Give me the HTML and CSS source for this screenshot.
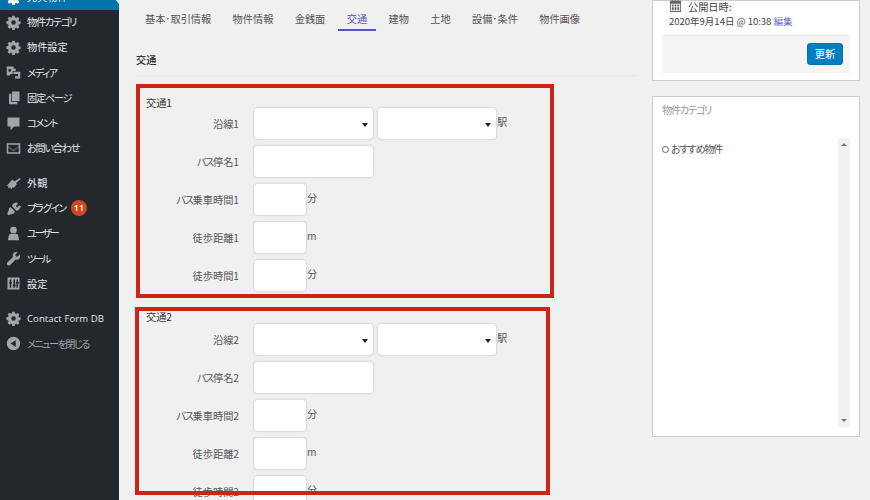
FILE: index.html
```html
<!DOCTYPE html>
<html lang="ja">
<head>
<meta charset="utf-8">
<title>交通</title>
<link rel="stylesheet" href="styles.css">
</head>
<body>
<svg class="defs" width="0" height="0" aria-hidden="true">
  <symbol id="gear" viewBox="0 0 20 20"><path d="M8.400 1h3.200l.5 2.400 1.500.6 2-1.300 2.200 2.200-1.300 2 .6 1.500 2.400.5v3.200l-2.400.5-.6 1.500 1.300 2-2.200 2.200-2-1.300-1.500.6-.5 2.400H8.400l-.5-2.400-1.500-.6-2 1.300-2.200-2.200 1.300-2-.6-1.500L.5 11.600V8.400l2.400-.5.6-1.500-1.300-2 2.200-2.200 2 1.300 1.500-.6zM10 7a3 3 0 1 0 0 6 3 3 0 0 0 0-6z" fill-rule="evenodd"/></symbol>
</svg>
<div class="layout">
  <nav class="sidebar">
    <a class="item current"><svg class="ico"><use href="#gear"/></svg><span>売買物件</span></a>
    <a class="item"><svg class="ico"><use href="#gear"/></svg><span class="kana">物件カテゴリ</span></a>
    <a class="item"><svg class="ico"><use href="#gear"/></svg><span>物件設定</span></a>
    <a class="item"><svg class="ico" viewBox="0 0 20 20"><path d="M1 2h9v3h3v3H9v4H6l-1 2H1zM5 5a2 2 0 1 0 0 4 2 2 0 0 0 0-4zM10 9h9v9h-7v-3h4v-3h-6z" fill-rule="evenodd"/></svg><span class="kana">メディア</span></a>
    <a class="item"><svg class="ico" viewBox="0 0 20 20"><path d="M8 2h10v13H8zM4 5h3v11h8v3H4z"/></svg><span class="kana">固定ページ</span></a>
    <a class="item"><svg class="ico" viewBox="0 0 20 20"><path d="M2 2h16v12h-7l-5 5v-5H2z"/></svg><span class="kana">コメント</span></a>
    <a class="item group-end"><svg class="ico" viewBox="0 0 20 20"><path d="M1 3h18v14H1zM3 5v1.500l7 5 7-5V5zM3 8.500V15h14V8.500l-7 5zM3 6.900l7 5 7-5v1.200l-7 5-7-5z" fill-rule="evenodd"/></svg><span class="kana">お問い合わせ</span></a>
    <a class="item"><svg class="ico" viewBox="0 0 20 20"><path d="M19 2.500l.5 1.500-7.500 6.500L9.500 8zM8.500 4.500l6 6-4 5.500-1.500-1.500-2 3.500-1.500-3-3 1.500 1-3.500-2.500 0z"/></svg><span>外観</span></a>
    <a class="item"><svg class="ico" viewBox="0 0 20 20"><path d="M14 1.500l2 2-3 3 2 2 3-3 2 2-3 4.500-3 1-6-6 1-3zM6 8l6 6-1.500 2.500-4 1L3.500 19 1.500 17l1.500-3 1-4z"/></svg><span class="kana">プラグイン</span><b class="badge">11</b></a>
    <a class="item"><svg class="ico" viewBox="0 0 20 20"><path d="M10 1a4.500 4.500 0 0 1 4.500 4.500c0 2.500-2 4.500-4.500 4.500S5.500 8 5.500 5.500A4.500 4.500 0 0 1 10 1zM4 11.500l3-1.500c1.500 1 4.500 1 6 0l3 1.500 1.500 7.500h-15z"/></svg><span class="kana-tight">ユーザー</span></a>
    <a class="item"><svg class="ico" viewBox="0 0 20 20"><path d="M18.500 4.500L14.500 8l-2.500-2.500 3.500-4c-3.500-1-6.500 1-6.500 4.500l.3 2L2 15c-1 1-1 2.500 0 3.500s2.500 1 3.500 0l7-7 2 .3c3.500 0 5-3.500 4-7.300z"/></svg><span class="kana-tight">ツール</span></a>
    <a class="item group-end"><svg class="ico" viewBox="0 0 20 20"><path d="M2 2h16v16H2zM5 4.500V8H4v2h1v5.500h2V10h1V8H7V4.500zm4 7v2h1v2h2v-2h1v-2h-1v-7h-2v7zm5-7V8h-1v2h1v5.500h2V10h1V8h-1V4.500z" fill-rule="evenodd"/></svg><span>設定</span></a>
    <a class="item"><svg class="ico"><use href="#gear"/></svg><span class="latin">Contact Form DB</span></a>
    <a class="item collapse"><svg class="ico" viewBox="0 0 20 20"><path d="M10 1a9 9 0 1 1 0 18 9 9 0 0 1 0-18zm3 4.500L6 10l7 4.500z" fill-rule="evenodd"/></svg><span class="kana-mid">メニューを閉じる</span></a>
  </nav>

  <main class="content">
    <div class="editor">
      <ul class="tabs">
        <li>基本･取引情報</li>
        <li>物件情報</li>
        <li>金銭面</li>
        <li class="active">交通</li>
        <li>建物</li>
        <li>土地</li>
        <li>設備･条件</li>
        <li>物件画像</li>
      </ul>
      <h2 class="section">交通</h2>

      <section class="group first">
        <h3>交通1</h3>
        <div class="row"><label>沿線1</label><span class="select"></span><span class="select"></span><span class="unit">駅</span></div>
        <div class="row"><label><span class="kana">バス</span>停名1</label><span class="input wide"></span></div>
        <div class="row"><label><span class="kana">バス</span>乗車時間1</label><span class="input"></span><span class="unit">分</span></div>
        <div class="row"><label>徒歩距離1</label><span class="input"></span><span class="unit">m</span></div>
        <div class="row"><label>徒歩時間1</label><span class="input"></span><span class="unit">分</span></div>
      </section>

      <section class="group second">
        <h3>交通2</h3>
        <div class="row"><label>沿線2</label><span class="select"></span><span class="select"></span><span class="unit">駅</span></div>
        <div class="row"><label><span class="kana">バス</span>停名2</label><span class="input wide"></span></div>
        <div class="row"><label><span class="kana">バス</span>乗車時間2</label><span class="input"></span><span class="unit">分</span></div>
        <div class="row"><label>徒歩距離2</label><span class="input"></span><span class="unit">m</span></div>
        <div class="row"><label>徒歩時間2</label><span class="input"></span><span class="unit">分</span></div>
      </section>
    </div>

    <aside class="side">
      <div class="box publish">
        <div class="pub-date">
          <p class="pub-line"><svg class="cal" viewBox="0 0 14 14"><path d="M1 2h2V0h1v2h2V0h1v2h2V0h1v2h3v12H1zM2 5v8h10V5zM3 6h2v2H3zm3 0h2v2H6zm3 0h2v2H9zM3 9h2v3H3zm3 0h2v3H6zm3 0h2v3H9z" fill-rule="evenodd"/></svg>公開日時:</p>
          <p class="pub-stamp">2020年9月14日 @ 10:38 <a>編集</a></p>
        </div>
        <div class="pub-actions"><button class="update">更新</button></div>
      </div>
      <div class="box cats">
        <h4 class="kana">物件カテゴリ</h4>
        <div class="cat-list">
          <label class="cat kana"><i class="radio"></i>おすすめ物件</label>
          <div class="scrollbar"><i class="up"></i><i class="down"></i></div>
        </div>
      </div>
    </aside>
  </main>
</div>
<div class="frame frame-1"></div>
<div class="frame frame-2"></div>
</body>
</html>
```
FILE: styles.css
```css
* { box-sizing: border-box; }
html, body { margin: 0; height: 500px; overflow: hidden; }
body {
  position: relative;
  background: #f0f0f0;
  color: #444;
  font: 10.2px/16px "Noto Sans CJK JP", "Noto Sans", sans-serif;
  font-feature-settings: "palt";
}
.defs { position: absolute; }
.layout { display: flex; height: 500px; overflow: hidden; }
.kana { letter-spacing: -1.300px; }
.kana-mid { letter-spacing: -1.600px; }
.kana-tight { letter-spacing: -2.300px; }

.sidebar {
  width: 119px;
  flex: none;
  background: #23282d;
  display: flex;
  flex-direction: column;
  margin-top: -15.500px;
  height: 516px;
}
.item {
  display: flex;
  align-items: center;
  height: 25.2px;
  padding-left: 6px;
  color: #e6e7e8;
  font-size: 10.2px;
  gap: 6px;
  flex: none;
}
.item.current { position: relative; background: #0073aa; color: #fff; }
.item.current::after {
  content: "";
  position: absolute;
  right: 0;
  top: 7px;
  border: 6px solid transparent;
  border-right: 5px solid #f0f0f0;
  border-left: 0;
}
.item.group-end { margin-bottom: 9.600px; }
.ico { width: 15px; height: 15px; fill: #a0a5aa; flex: none; }
.current .ico { fill: #fff; }
.latin { font-family: "Open Sans", sans-serif; font-size: 9.500px; letter-spacing: .1px; }
.collapse { color: #a0a5aa; }
.badge {
  background: #ca4a1f;
  color: #fff;
  width: 16px;
  height: 16px;
  margin-left: -1px;
  border-radius: 50%;
  font: 600 9px/16px "Open Sans", sans-serif;
  text-align: center;
}

.content { flex: 1; display: flex; min-width: 0; }
.editor { width: 532px; padding: 0 0 0 17px; flex: none; }
.tabs {
  display: flex;
  list-style: none;
  margin: 0;
  padding: 0;
  height: 31px;
  color: #555;
}
.tabs li { padding: 11px 9px 0; margin-right: 3.400px; height: 31px; line-height: 15px; white-space: nowrap; }
.tabs .active { color: #4f55b8; border-bottom: 2px solid #4f55c4; }
.section {
  margin: 20px 15px 0 0;
  height: 25px;
  font-size: 10.2px;
  font-weight: 500;
  line-height: 17px;
  color: #333;
  border-bottom: 1px solid #e6e6e6;
}
.group { padding-left: 10px; }
.group.first { margin-top: 21px; }
.group.second { margin-top: 14px; }
.group h3 {
  margin: 0;
  height: 12px;
  font-size: 10.2px;
  font-weight: 400;
  line-height: 12px;
  color: #333;
}
.group.first h3 { height: 10px; }
.row { display: flex; height: 38px; align-items: flex-start; }
.row label {
  width: 93px;
  flex: none;
  margin-top: 9px;
  text-align: right;
  color: #555;
  line-height: 16px;
}
.input, .select {
  display: block;
  height: 33px;
  margin-left: 14px;
  background: #fff;
  border: 1px solid #ddd;
  border-radius: 4px;
  box-shadow: 0 0 0 .5px #e4e4e4;
  flex: none;
}
.input { width: 54px; }
.input.wide, .select { width: 120.500px; }
.select { position: relative; }
.select + .select { margin-left: 3px; }
.select::after {
  content: "";
  position: absolute;
  right: 5px;
  top: 15px;
  border: 3px solid transparent;
  border-top: 4px solid #222;
  border-bottom: 0;
}
.unit { margin-top: 7px; color: #555; }

.side { width: 208px; margin-left: 1px; flex: none; display: flex; flex-direction: column; gap: 15px; }
.box { background: #fff; border: 1px solid #ccd0d4; }
.publish { height: 81px; padding-left: 9px; padding-right: 9px; }
.pub-date { height: 34px; }
.pub-date p { margin: 0; line-height: 16px; color: #444; }
.pub-line { display: flex; align-items: center; gap: 6px; padding-left: 7px; height: 12px; }
.pub-stamp { padding-left: 7px; height: 16px; white-space: nowrap; font-size: 9.500px; }
.cal { width: 13px; height: 13px; fill: #666; margin-top: -4px; }
.pub-stamp a { color: #6a6ec8; }
.pub-actions {
  height: 38px;
  background: #f5f5f5;
  border-top: 1px solid #e4e4e4;
  display: flex;
  justify-content: flex-end;
  align-items: flex-start;
  padding: 7px 7px 0 0;
}
.update {
  width: 36px;
  height: 22px;
  padding: 0;
  background: #0080c0;
  border: 1px solid #0073aa;
  border-radius: 3px;
  color: #fff;
  font: 10.2px/20px "Noto Sans CJK JP", sans-serif;
}
.cats { height: 341px; padding: 0 9px; }
.cats h4 {
  margin: 0;
  height: 41px;
  padding-top: 5px;
  font-size: 10.2px;
  font-weight: 400;
  line-height: 16px;
  color: #999;
}
.cat-list { height: 289px; display: flex; justify-content: space-between; }
.cat { display: flex; align-items: center; gap: 2px; height: 16px; margin-top: 3px; color: #555; }
.radio { width: 7px; height: 7px; border: 1px solid #666; border-radius: 50%; flex: none; }
.scrollbar {
  width: 12px;
  background: #f1f1f1;
  display: flex;
  flex-direction: column;
  justify-content: space-between;
  align-items: center;
  padding: 5px 0;
}
.up { border: 3px solid transparent; border-bottom: 3px solid #777; border-top: 0; }
.down { border: 3px solid transparent; border-top: 3px solid #777; border-bottom: 0; }

.frame { position: absolute; border: 4px solid #cc2418; pointer-events: none; }
.frame-1 { left: 136px; top: 84px; width: 418px; height: 214px; }
.frame-2 { left: 135px; top: 307px; width: 415px; height: 188px; }
```
